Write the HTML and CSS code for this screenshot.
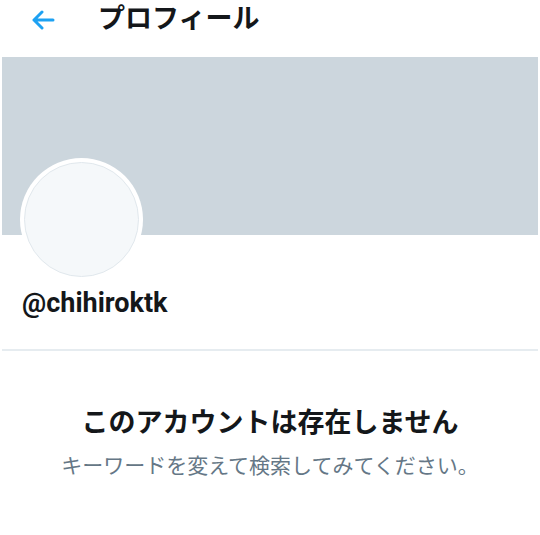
FILE: index.html
```html
<!DOCTYPE html>
<html lang="ja">
<head>
<meta charset="utf-8">
<title>プロフィール</title>
<link rel="stylesheet" href="styles.css">
</head>
<body>
<div class="page">
  <header class="topbar">
    <span class="back">
      <svg width="24" height="20" viewBox="0 0 24 20"><path d="M22 10H3M11 2L3 10l8 8" fill="none" stroke="#1da1f2" stroke-width="3" stroke-linecap="round" stroke-linejoin="round"/></svg>
    </span>
    <h1 class="title">プロフィール</h1>
  </header>
  <div class="banner"></div>
  <div class="avatar"><div class="avatar-inner"></div></div>
  <div class="handle">@chihiroktk</div>
  <hr class="divider">
  <section class="empty">
    <h2 class="empty-title">このアカウントは存在しません</h2>
    <p class="empty-sub">キーワードを変えて検索してみてください。</p>
  </section>
</div>
</body>
</html>
```
FILE: styles.css
```css
html, body {
  margin: 0;
  padding: 0;
  background: #fff;
}
body {
  font-family: Roboto, "Noto Sans CJK JP", sans-serif;
  color: #14171a;
}
.page {
  width: 540px;
}
.topbar {
  height: 57px;
  display: flex;
  align-items: center;
  padding-left: 31px;
  box-sizing: border-box;
}
.back {
  display: flex;
  width: 24px;
  height: 20px;
  margin-top: -18px;
}
.title {
  margin: -20px 0 0 43px;
  font-size: 27px;
  font-weight: 700;
  line-height: 34px;
}
.banner {
  margin: 0 2px;
  height: 178px;
  background: #ccd6dd;
}
.avatar {
  width: 123px;
  height: 123px;
  margin: -77px 0 0 20px;
  border-radius: 50%;
  background: #fff;
  padding: 4px;
  box-sizing: border-box;
  position: relative;
}
.avatar-inner {
  width: 100%;
  height: 100%;
  border-radius: 50%;
  background: #f5f8fa;
  border: 1px solid #e1e8ed;
  box-sizing: border-box;
}
.handle {
  margin: 6px 0 0 22px;
  font-size: 27px;
  font-weight: 700;
  line-height: 32px;
}
.divider {
  margin: 30px 2px 0;
  border: 0;
  height: 2px;
  background: #e6ecf0;
}
.empty {
  text-align: center;
  padding-top: 54px;
}
.empty-title {
  margin: 0;
  font-size: 27px;
  font-weight: 700;
  line-height: 36px;
}
.empty-sub {
  margin: 11px 0 0;
  font-size: 21px;
  line-height: 28px;
  color: #657786;
}
```
